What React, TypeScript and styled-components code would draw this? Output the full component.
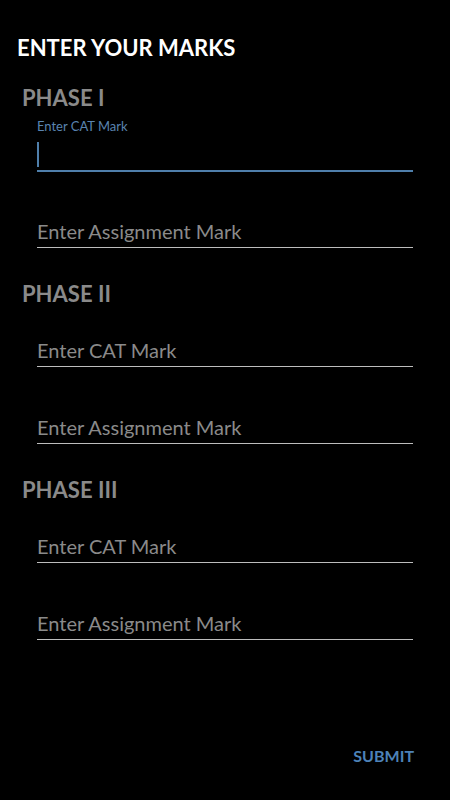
import React, { FC } from 'react';
import styled, { createGlobalStyle } from 'styled-components';

const colors = {
  background: '#000000',
  title: '#ffffff',
  phase: '#8a8a8a',
  placeholder: '#8a8a8a',
  label: '#5a84b0',
  accent: '#4f7fab',
  line: '#bdbdbd',
  submit: '#4d82b8',
};

const GlobalStyle = createGlobalStyle`
  html, body {
    margin: 0;
    padding: 0;
    background-color: ${colors.background};
  }

  body {
    font-family: Lato, "Open Sans", "Liberation Sans", sans-serif;
  }
`;

const StyledPage = styled.div`
  display: flex;
  flex-direction: column;
  min-height: 100vh;
  box-sizing: border-box;
  padding: 35px 36px 35px 17px;
`;

const Title = styled.h1`
  margin: 0 0 24px;
  font-size: 22px;
  line-height: 26px;
  font-weight: 700;
  color: ${colors.title};
`;

const PhaseSection = styled.section`
  display: flex;
  flex-direction: column;

  & + & {
    margin-top: 32px;
  }
`;

const PhaseHeader = styled.h2`
  margin: 0 0 0 5px;
  font-size: 22px;
  line-height: 26px;
  font-weight: 700;
  color: ${colors.phase};
`;

const FieldList = styled.div`
  display: flex;
  flex-direction: column;
  gap: 16px;
  margin: 0 1px 0 20px;
`;

const Field = styled.div`
  display: flex;
  flex-direction: column;
  padding-top: 7px;
`;

const FloatingLabel = styled.span<{ $visible: boolean }>`
  height: 16px;
  font-size: 13px;
  line-height: 16px;
  color: ${colors.label};
  visibility: ${({ $visible }) => ($visible ? 'visible' : 'hidden')};
`;

const InputArea = styled.div<{ $focused: boolean }>`
  display: flex;
  align-items: flex-start;
  box-sizing: border-box;
  padding-top: 8px;
  height: ${({ $focused }) => ($focused ? '38px' : '37px')};
  margin-bottom: ${({ $focused }) => ($focused ? '0' : '1px')};
  border-bottom: ${({ $focused }) =>
    $focused ? `2px solid ${colors.accent}` : `1px solid ${colors.line}`};
`;

const Placeholder = styled.span`
  font-size: 20px;
  line-height: 24px;
  color: ${colors.placeholder};
`;

const Caret = styled.span`
  width: 2px;
  height: 25px;
  background-color: ${colors.accent};
`;

const Footer = styled.div`
  display: flex;
  justify-content: flex-end;
  margin-top: auto;
`;

const SubmitButton = styled.button`
  padding: 0;
  border: none;
  background: none;
  font-family: inherit;
  font-size: 16px;
  line-height: 18px;
  font-weight: 700;
  color: ${colors.submit};
  cursor: pointer;
`;

interface MarkFieldProps {
  label: string;
  focused?: boolean;
}

const MarkField: FC<MarkFieldProps> = ({ label, focused = false }) => (
  <Field>
    <FloatingLabel $visible={focused}>{label}</FloatingLabel>
    <InputArea $focused={focused}>
      {focused ? <Caret /> : <Placeholder>{label}</Placeholder>}
    </InputArea>
  </Field>
);

const phases = ['PHASE I', 'PHASE II', 'PHASE III'];

const App: FC = () => (
  <>
    <GlobalStyle />
    <StyledPage>
      <Title>ENTER YOUR MARKS</Title>
      {phases.map((phase, index) => (
        <PhaseSection key={phase}>
          <PhaseHeader>{phase}</PhaseHeader>
          <FieldList>
            <MarkField label="Enter CAT Mark" focused={index === 0} />
            <MarkField label="Enter Assignment Mark" />
          </FieldList>
        </PhaseSection>
      ))}
      <Footer>
        <SubmitButton type="button">SUBMIT</SubmitButton>
      </Footer>
    </StyledPage>
  </>
);

export default App;
